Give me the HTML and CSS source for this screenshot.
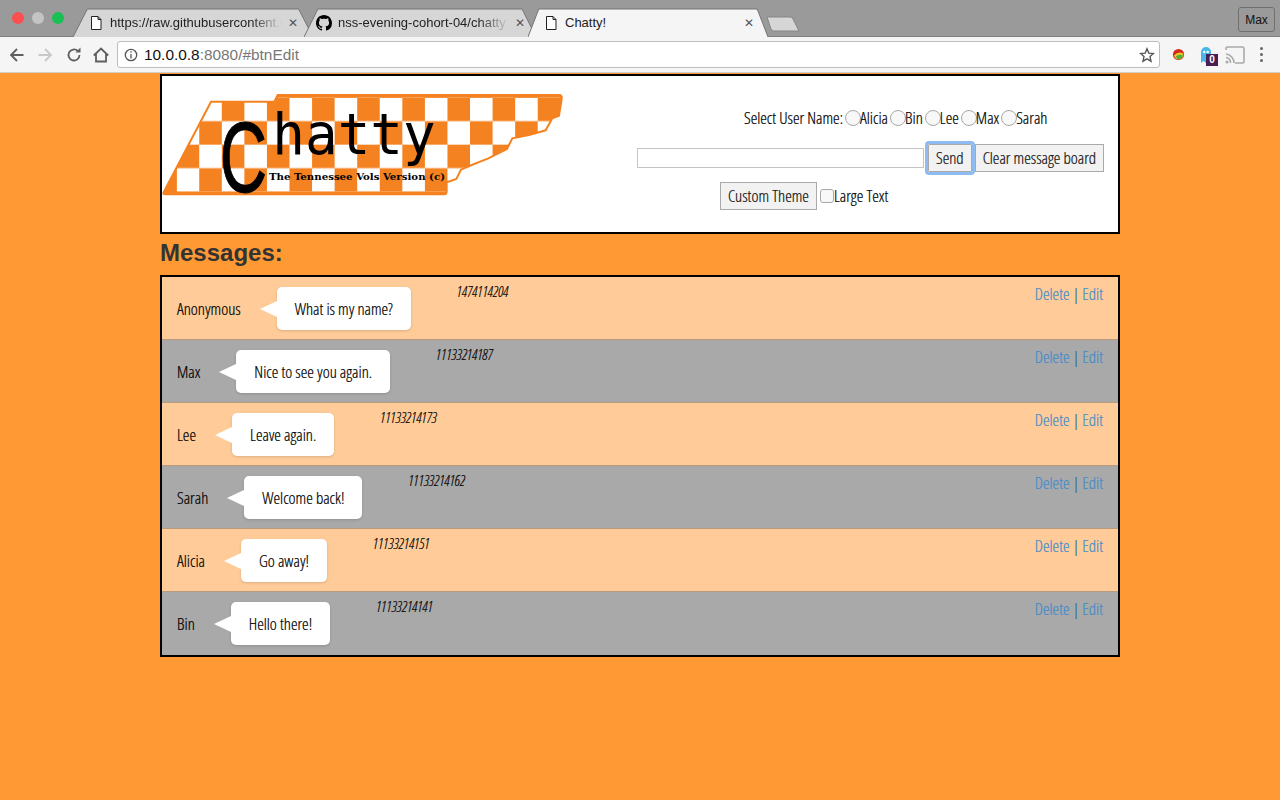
FILE: index.html
```html
<!DOCTYPE html>
<html lang="en">
<head>
    <meta charset="UTF-8">
    <meta name="viewport" content="width=device-width, initial-scale=1.0">
    <title>Chatty!</title>
    <link rel="stylesheet" href="styles.css">
</head>
<body>
    <div class="browser">
        <div class="tabbar">
            <div class="lights">
                <span class="light red"></span>
                <span class="light grey"></span>
                <span class="light green"></span>
            </div>
            <div class="tab tab-one">
                <svg class="tab-shape" viewBox="0 0 100 29" preserveAspectRatio="none"><path d="M0 29 L6 1 H94 L100 29" vector-effect="non-scaling-stroke"/></svg>
                <svg class="file-icon" viewBox="0 0 12 14"><path d="M1.5 .5H8L11 3.5V13.500H1.500Z M8 .5V3.500H11"/></svg>
                <span class="tab-title tab-fade">https://raw.githubusercontent.com</span>
                <span class="tab-close">✕</span>
            </div>
            <div class="tab tab-two">
                <svg class="tab-shape" viewBox="0 0 100 29" preserveAspectRatio="none"><path d="M0 29 L6 1 H94 L100 29" vector-effect="non-scaling-stroke"/></svg>
                <svg class="git-icon" viewBox="0 0 16 16"><path d="M8 0C3.580 0 0 3.580 0 8c0 3.540 2.290 6.530 5.470 7.590.4.070.55-.17.55-.38 0-.19-.01-.82-.01-1.490-2.010.37-2.530-.49-2.690-.94-.09-.23-.48-.94-.82-1.130-.28-.15-.68-.52-.01-.53.63-.01 1.080.58 1.230.82.720 1.210 1.870.87 2.330.66.070-.52.280-.87.510-1.070-1.780-.2-3.640-.89-3.640-3.950 0-.87.310-1.590.820-2.150-.08-.2-.36-1.020.08-2.120 0 0 .67-.21 2.200.82.640-.18 1.320-.27 2-.27s1.360.09 2 .27c1.530-1.040 2.200-.82 2.200-.82.440 1.100.160 1.920.080 2.120.510.56.820 1.270.820 2.150 0 3.070-1.870 3.750-3.650 3.950.290.25.540.73.540 1.480 0 1.070-.01 1.930-.01 2.200 0 .21.150.46.550.38A8.010 8.010 0 0 0 16 8c0-4.420-3.580-8-8-8z"/></svg>
                <span class="tab-title tab-fade">nss-evening-cohort-04/chatty</span>
                <span class="tab-close">✕</span>
            </div>
            <div class="tab tab-active">
                <svg class="tab-shape" viewBox="0 0 100 29" preserveAspectRatio="none"><path d="M0 29 L4.500 1 H95.500 L100 29" vector-effect="non-scaling-stroke"/></svg>
                <svg class="file-icon" viewBox="0 0 12 14"><path d="M1.5 .5H8L11 3.5V13.500H1.500Z M8 .5V3.500H11"/></svg>
                <span class="tab-title">Chatty!</span>
                <span class="tab-close">✕</span>
            </div>
            <svg class="new-tab" viewBox="0 0 34 16"><path d="M1 1H24Q26 1 27 3L33 15H8Q6 15 5 13Z"/></svg>
            <div class="profile">Max</div>
        </div>
        <div class="toolbar">
            <svg class="nav-icon" viewBox="0 0 16 16"><path class="stroke-dark" d="M14.500 8H2M8 2L2 8L8 14"/></svg>
            <svg class="nav-icon" viewBox="0 0 16 16"><path class="stroke-light" d="M1.500 8H14M8 2L14 8L8 14"/></svg>
            <svg class="nav-icon nav-reload" viewBox="0 0 16 16"><path class="stroke-dark" d="M13.500 8A5.500 5.500 0 1 1 11.800 4"/><path class="fill-dark" d="M9.500 5.500H14.500V.5Z"/></svg>
            <svg class="nav-icon" viewBox="0 0 16 16"><path class="stroke-dark" d="M.8 8.500L8 1.500L15.200 8.500M3 7V14.500H13V7"/></svg>
            <div class="omnibox">
                <svg class="info-icon" viewBox="0 0 14 14"><circle cx="7" cy="7" r="5.700"/><path d="M7 6V10.500M7 3.200V4.800"/></svg>
                <span class="url-host">10.0.0.8</span><span class="url-rest">:8080/#btnEdit</span>
                <svg class="star-icon" viewBox="0 0 16 16"><path d="M8 1.800L9.800 6.100L14.500 6.500L11 9.600L12 14.200L8 11.800L4 14.200L5 9.600L1.500 6.500L6.200 6.100Z"/></svg>
            </div>
            <svg class="ext-icon" viewBox="0 0 14 14"><circle cx="7" cy="7" r="6" fill="#d7261e"/><path d="M2 8Q7 3 12 6Q13 10 9 12Q4 13 2 8Z" fill="#e9c629"/><path d="M4 9Q8 6 12 8Q10 12 7 12Q5 12 4 9Z" fill="#4caf3c"/></svg>
            <div class="ghost">
                <svg viewBox="0 0 12 18"><path d="M1 17V6A5 5 0 0 1 11 6V17L8.500 15L6 17L3.500 15Z" fill="#45b8e8"/><circle cx="4.300" cy="6" r="1.200" fill="#fff"/><circle cx="7.700" cy="6" r="1.200" fill="#fff"/></svg>
                <span class="ghost-badge">0</span>
            </div>
            <svg class="cast-icon" viewBox="0 0 20 18"><path d="M1 4V2.500Q1 1 2.500 1H17.500Q19 1 19 2.500V15.500Q19 17 17.500 17H10" fill="none" stroke="#a9a9a9" stroke-width="1.600"/><path d="M1 8A9 9 0 0 1 9 17M1 11.500A5.500 5.500 0 0 1 5.500 17" fill="none" stroke="#a9a9a9" stroke-width="1.600"/><circle cx="2" cy="16" r="1.500" fill="#a9a9a9"/></svg>
            <div class="menu-dots"><i></i><i></i><i></i></div>
        </div>
    </div>

    <div class="page">
        <header class="top">
            <svg class="logo" viewBox="0 0 1260 400">
                <defs>
                    <pattern id="check" x="65" y="68" width="135.400" height="141" patternUnits="userSpaceOnUse">
                        <rect x="0" y="0" width="135.400" height="141" fill="#f58220"/>
                        <rect x="67.700" y="0" width="67.700" height="70.500" fill="#fff"/>
                        <rect x="0" y="70.500" width="67.700" height="70.500" fill="#fff"/>
                    </pattern>
                    <clipPath id="state">
                        <path d="M26 352L168 80H358L368 60H1212Q1222 60 1220 72L1212 122L1192 130L1172 166L1122 180L1072 190L1056 222L1000 250L950 270L918 284L904 312L875 322V350Q875 358 865 358H34Q22 358 26 352Z"/>
                    </clipPath>
                </defs>
                <g clip-path="url(#state)">
                    <rect x="0" y="40" width="1260" height="340" fill="#f58220"/>
                    <rect x="65" y="68" width="1150" height="282" fill="url(#check)"/>
                </g>
                <path class="logo-edge" d="M26 352L168 80H358L368 60H1212Q1222 60 1220 72L1212 122L1192 130L1172 166L1122 180L1072 190L1056 222L1000 250L950 270L918 284L904 312L875 322V350Q875 358 865 358H34Q22 358 26 352Z"/>
                <text class="logo-c" x="194" y="350" textLength="142" lengthAdjust="spacingAndGlyphs">C</text>
                <text class="logo-hatty" x="352" y="238" textLength="490" lengthAdjust="spacingAndGlyphs">hatty</text>
                <text class="logo-sub" x="342" y="316" textLength="528" lengthAdjust="spacingAndGlyphs">The Tennessee Vols Version (c)</text>
            </svg>
            <div class="controls">
                <div class="user-row">
                    <span>Select User Name:</span>
                    <input type="radio" name="user"><label>Alicia</label>
                    <input type="radio" name="user"><label>Bin</label>
                    <input type="radio" name="user"><label>Lee</label>
                    <input type="radio" name="user"><label>Max</label>
                    <input type="radio" name="user"><label>Sarah</label>
                </div>
                <div class="send-row">
                    <input type="text" class="message-input">
                    <button class="btn btn-focus">Send</button>
                    <button class="btn">Clear message board</button>
                </div>
                <div class="theme-row">
                    <button class="btn btn-tall">Custom Theme</button>
                    <input type="checkbox" class="large-check"><label>Large Text</label>
                </div>
            </div>
        </header>

        <h2 class="heading">Messages:</h2>

        <div class="board">
            <div class="msg odd">
                <span class="name">Anonymous</span>
                <div class="bubble">What is my name?</div>
                <span class="stamp">1474114204</span>
                <span class="actions"><a>Delete</a> | <a>Edit</a></span>
            </div>
            <div class="msg even">
                <span class="name">Max</span>
                <div class="bubble">Nice to see you again.</div>
                <span class="stamp">11133214187</span>
                <span class="actions"><a>Delete</a> | <a>Edit</a></span>
            </div>
            <div class="msg odd">
                <span class="name">Lee</span>
                <div class="bubble">Leave again.</div>
                <span class="stamp">11133214173</span>
                <span class="actions"><a>Delete</a> | <a>Edit</a></span>
            </div>
            <div class="msg even">
                <span class="name">Sarah</span>
                <div class="bubble">Welcome back!</div>
                <span class="stamp">11133214162</span>
                <span class="actions"><a>Delete</a> | <a>Edit</a></span>
            </div>
            <div class="msg odd">
                <span class="name">Alicia</span>
                <div class="bubble">Go away!</div>
                <span class="stamp">11133214151</span>
                <span class="actions"><a>Delete</a> | <a>Edit</a></span>
            </div>
            <div class="msg even">
                <span class="name">Bin</span>
                <div class="bubble">Hello there!</div>
                <span class="stamp">11133214141</span>
                <span class="actions"><a>Delete</a> | <a>Edit</a></span>
            </div>
        </div>
    </div>
</body>
</html>
```

FILE: styles.css
```css
* {
    box-sizing: border-box;
}

html, body {
    height: 100%;
}

body {
    margin: 0;
    background-color: #ff9933;
    font-family: "Open Sans", "Liberation Sans", sans-serif;
    font-stretch: 75%;
    font-weight: 300;
    font-size: 16.700px;
    color: #000;
    overflow: hidden;
}

/* light condensed text needs a little weight */
.controls, .board {
    -webkit-text-stroke: 0.2px;
}

/* browser chrome */
.browser {
    height: 73px;
    font-family: "Liberation Sans", Arial, sans-serif;
    font-stretch: normal;
    font-weight: normal;
}

.tabbar {
    height: 37px;
    background: #9a9a9a;
    display: flex;
    align-items: flex-end;
    border-bottom: 1px solid #7e7e7e;
}

.lights {
    display: flex;
    gap: 8px;
    padding: 0 0 12px 12px;
    width: 73px;
}

.light {
    width: 12px;
    height: 12px;
    border-radius: 50%;
}

.light.red { background: #fc4f4f; }
.light.grey { background: #c4c4c4; }
.light.green { background: #19c155; }

.tab {
    position: relative;
    height: 29px;
    display: flex;
    align-items: center;
    font-size: 13px;
    margin-bottom: -1px;
    color: #222;
}

.tab-one { width: 240px; padding: 0 15px 0 17px; }
.tab-two { width: 232px; padding: 0 11px 0 12px; margin-left: -9px; }
.tab-active { width: 240px; padding: 0 14px 0 17px; margin-left: -8px; }

.tab-two .tab-title { margin-left: 6px; }

.tab-shape {
    position: absolute;
    left: 0;
    top: 0;
    width: 100%;
    height: 100%;
}

.tab-shape path {
    fill: #d6d6d6;
    stroke: #757575;
    stroke-width: 1;
}

.tab-active .tab-shape path {
    fill: #f5f5f5;
}

.tab-title {
    position: relative;
    flex: 1;
    overflow: hidden;
    white-space: nowrap;
    margin-left: 8px;
}

.tab-fade {
    -webkit-mask-image: linear-gradient(to right, #000 82%, transparent 100%);
    mask-image: linear-gradient(to right, #000 82%, transparent 100%);
}

.tab-close {
    position: relative;
    font-size: 12px;
    color: #555;
    margin-left: 6px;
}

.file-icon {
    position: relative;
    width: 12px;
    height: 14px;
    flex: none;
}

.file-icon path {
    fill: #fff;
    stroke: #222;
    stroke-width: 1;
}

.git-icon {
    position: relative;
    width: 16px;
    height: 16px;
    flex: none;
}

.new-tab {
    width: 34px;
    height: 16px;
    margin: 0 0 4px -2px;
    flex: none;
}

.new-tab path {
    fill: #d6d6d6;
    stroke: #858585;
}

.profile {
    margin: 0 5px 4px auto;
    width: 37px;
    height: 25px;
    border: 1px solid #707070;
    border-radius: 3px;
    font-size: 12px;
    display: flex;
    align-items: center;
    justify-content: center;
    color: #111;
}

.toolbar {
    height: 36px;
    background: #f5f5f5;
    border-bottom: 1px solid #cfcfcf;
    display: flex;
    align-items: center;
    padding-left: 9px;
}

.nav-icon {
    width: 16px;
    height: 16px;
    margin-right: 12px;
    flex: none;
}

.nav-reload {
    margin-left: 1px;
    margin-right: 11px;
}

.stroke-dark {
    fill: none;
    stroke: #5f5f5f;
    stroke-width: 1.800;
}

.stroke-light {
    fill: none;
    stroke: #c8c8c8;
    stroke-width: 1.800;
}

.fill-dark {
    fill: #5f5f5f;
}

.omnibox {
    width: 1043px;
    height: 27px;
    margin-left: -4px;
    background: #fff;
    border: 1px solid #bdbdbd;
    border-radius: 3px;
    display: flex;
    align-items: center;
    padding: 0 4px 0 6px;
    font-size: 15.400px;
}

.info-icon {
    width: 14px;
    height: 14px;
    margin-right: 6px;
    fill: none;
    stroke: #555;
    stroke-width: 1.300;
}

.url-host { color: #111; }
.url-rest { color: #777; }

.star-icon {
    width: 16px;
    height: 16px;
    margin-left: auto;
    fill: none;
    stroke: #555;
    stroke-width: 1.400;
}

.ext-icon {
    width: 13px;
    height: 13px;
    margin-left: 12px;
}

.ghost {
    position: relative;
    width: 12px;
    height: 18px;
    margin-left: 15px;
}

.ghost svg {
    display: block;
}

.ghost-badge {
    position: absolute;
    left: 6px;
    top: 8px;
    width: 12px;
    height: 12px;
    background: #4a1d52;
    color: #fff;
    font-size: 10px;
    font-weight: bold;
    line-height: 12px;
    text-align: center;
}

.cast-icon {
    width: 22px;
    height: 18px;
    margin-left: 12px;
}

.menu-dots {
    display: flex;
    flex-direction: column;
    gap: 3px;
    margin-left: 14px;
}

.menu-dots i {
    width: 3px;
    height: 3px;
    border-radius: 50%;
    background: #666;
}

/* page */
.page {
    width: 960px;
    margin: 1px auto 0;
}

.top {
    height: 160px;
    background: #fff;
    border: 2px solid #000;
    display: flex;
}

.logo {
    width: 420px;
    height: 133.333px;
    flex: none;
    margin: -1px 0 0 -7px;
}

.logo-edge {
    fill: none;
    stroke: #f58220;
    stroke-width: 6;
}

.logo-c {
    font-family: "Liberation Sans", sans-serif;
    font-size: 300px;
    fill: #000;
    stroke: #000;
    stroke-width: 3;
}

.logo-hatty {
    font-family: "DejaVu Sans Mono", monospace;
    font-size: 172px;
    fill: #000;
}

.logo-sub {
    font-family: "DejaVu Serif", serif;
    font-weight: bold;
    font-size: 30px;
    fill: #000;
}

.controls {
    margin-left: 62px;
    width: 470px;
    display: flex;
    flex-direction: column;
}

.user-row {
    display: flex;
    align-items: center;
    height: 24px;
    margin: 29px 0 0 107px;
}

.user-row input {
    appearance: none;
    width: 16px;
    height: 16px;
    margin: 2px -1px 0 2px;
    border: 1px solid #a8a8a8;
    border-radius: 50%;
    background: #f8f8f8;
}

.send-row {
    display: flex;
    align-items: center;
    height: 28px;
    margin-top: 15px;
}

.message-input {
    width: 287px;
    height: 20px;
    border: 1px solid #c4c4c4;
    background: #fff;
    padding: 0;
}

.btn {
    height: 28px;
    padding: 0 7px 2px;
    border: 1px solid #aaa;
    background: #f2f2f2;
    font-family: inherit;
    font-stretch: inherit;
    font-weight: inherit;
    font-size: inherit;
    color: #111;
    margin-left: 3px;
    white-space: nowrap;
}

.btn-focus {
    margin-left: 4px;
    outline: 3px solid #8ebcf0;
    outline-offset: 0;
    border-radius: 1px;
}

.btn-tall {
    margin: 0;
}

.theme-row {
    display: flex;
    align-items: center;
    height: 28px;
    margin: 10px 0 0 83px;
}

.theme-row label {
    margin-top: -2px;
}

.large-check {
    appearance: none;
    width: 14px;
    height: 14px;
    margin: 0 0 0 3px;
    border: 1px solid #a8a8a8;
    border-radius: 3px;
    background: #f8f8f8;
}

.heading {
    font-family: "Liberation Sans", Arial, sans-serif;
    font-stretch: normal;
    font-size: 24px;
    font-weight: bold;
    color: #333;
    height: 41px;
    line-height: 38px;
    margin: 0;
}

.board {
    border: 2px solid #000;
}

.msg {
    height: 63px;
    display: flex;
    align-items: flex-start;
    padding: 10px 15px 0;
    border-bottom: 1px solid #b99a7b;
}

.msg:last-child {
    border-bottom: none;
}

.msg.odd { background: #ffcc99; }
.msg.even { background: #a9a9a9; }

.name {
    line-height: 44px;
    margin-right: 36px;
}

.bubble {
    position: relative;
    height: 43px;
    line-height: 44px;
    padding: 0 18px;
    background: #fff;
    border-radius: 5px;
    box-shadow: 0 1px 3px rgba(0, 0, 0, 0.15);
}

.bubble::before {
    content: "";
    position: absolute;
    left: -17px;
    top: 14px;
    border-style: solid;
    border-width: 8px 17px 8px 0;
    border-color: transparent #fff transparent transparent;
}

.stamp {
    font-size: 14.300px;
    font-style: italic;
    margin-left: 46px;
    line-height: 16px;
    margin-top: -3px;
}

.actions {
    margin-left: auto;
    color: #2a6496;
    line-height: 20px;
    margin-top: -3px;
}

.actions a {
    color: #428bca;
}
```
